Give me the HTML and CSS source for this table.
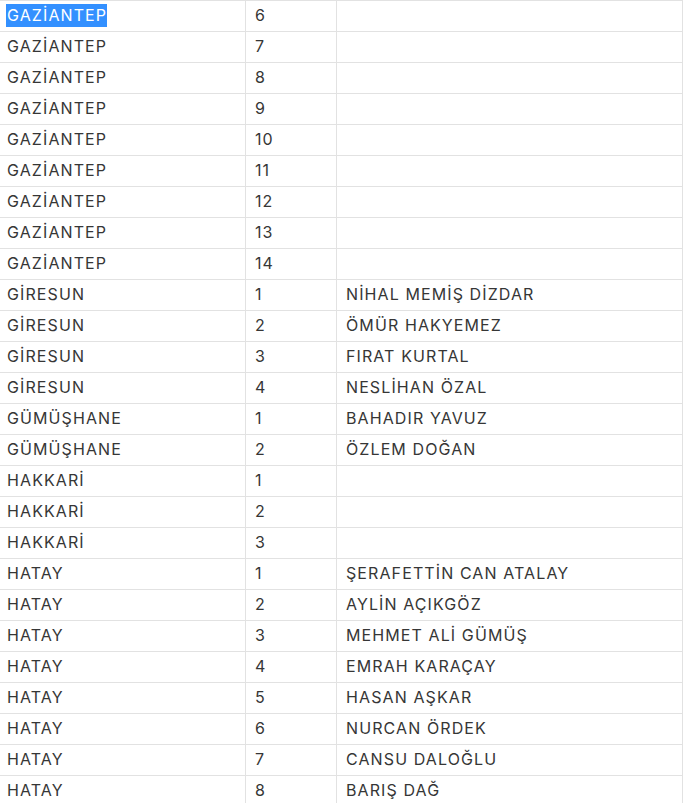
FILE: index.html
```html
<!DOCTYPE html>
<html lang="tr">
<head>
<meta charset="utf-8">
<link rel="stylesheet" href="styles.css">
</head>
<body>
<table class="grid">
<tbody>
<tr><td class="c1"><span class="sel">GAZİANTEP</span></td><td class="c2">6</td><td class="c3"></td></tr>
<tr><td class="c1">GAZİANTEP</td><td class="c2">7</td><td class="c3"></td></tr>
<tr><td class="c1">GAZİANTEP</td><td class="c2">8</td><td class="c3"></td></tr>
<tr><td class="c1">GAZİANTEP</td><td class="c2">9</td><td class="c3"></td></tr>
<tr><td class="c1">GAZİANTEP</td><td class="c2">10</td><td class="c3"></td></tr>
<tr><td class="c1">GAZİANTEP</td><td class="c2">11</td><td class="c3"></td></tr>
<tr><td class="c1">GAZİANTEP</td><td class="c2">12</td><td class="c3"></td></tr>
<tr><td class="c1">GAZİANTEP</td><td class="c2">13</td><td class="c3"></td></tr>
<tr><td class="c1">GAZİANTEP</td><td class="c2">14</td><td class="c3"></td></tr>
<tr><td class="c1">GİRESUN</td><td class="c2">1</td><td class="c3">NİHAL MEMİŞ DİZDAR</td></tr>
<tr><td class="c1">GİRESUN</td><td class="c2">2</td><td class="c3">ÖMÜR HAKYEMEZ</td></tr>
<tr><td class="c1">GİRESUN</td><td class="c2">3</td><td class="c3">FIRAT KURTAL</td></tr>
<tr><td class="c1">GİRESUN</td><td class="c2">4</td><td class="c3">NESLİHAN ÖZAL</td></tr>
<tr><td class="c1">GÜMÜŞHANE</td><td class="c2">1</td><td class="c3">BAHADIR YAVUZ</td></tr>
<tr><td class="c1">GÜMÜŞHANE</td><td class="c2">2</td><td class="c3">ÖZLEM DOĞAN</td></tr>
<tr><td class="c1">HAKKARİ</td><td class="c2">1</td><td class="c3"></td></tr>
<tr><td class="c1">HAKKARİ</td><td class="c2">2</td><td class="c3"></td></tr>
<tr><td class="c1">HAKKARİ</td><td class="c2">3</td><td class="c3"></td></tr>
<tr><td class="c1">HATAY</td><td class="c2">1</td><td class="c3">ŞERAFETTİN CAN ATALAY</td></tr>
<tr><td class="c1">HATAY</td><td class="c2">2</td><td class="c3">AYLİN AÇIKGÖZ</td></tr>
<tr><td class="c1">HATAY</td><td class="c2">3</td><td class="c3">MEHMET ALİ GÜMÜŞ</td></tr>
<tr><td class="c1">HATAY</td><td class="c2">4</td><td class="c3">EMRAH KARAÇAY</td></tr>
<tr><td class="c1">HATAY</td><td class="c2">5</td><td class="c3">HASAN AŞKAR</td></tr>
<tr><td class="c1">HATAY</td><td class="c2">6</td><td class="c3">NURCAN ÖRDEK</td></tr>
<tr><td class="c1">HATAY</td><td class="c2">7</td><td class="c3">CANSU DALOĞLU</td></tr>
<tr><td class="c1">HATAY</td><td class="c2">8</td><td class="c3">BARIŞ DAĞ</td></tr>
</tbody>
</table>
</body>
</html>
```
FILE: styles.css
```css
html, body {
  margin: 0;
  padding: 0;
  background: #fff;
}
body {
  font-family: Inter, "Noto Sans", sans-serif;
  font-size: 16px;
  letter-spacing: 1.1px;
  color: #363636;
  overflow: hidden;
}
.grid {
  border-collapse: collapse;
  table-layout: fixed;
  width: 683px;
  margin-left: -1px;
}
.grid td {
  border: 1px solid #e2e2e2;
  height: 31px;
  padding: 0 0 2px 7px;
  vertical-align: middle;
  white-space: nowrap;
  box-sizing: border-box;
  line-height: 23px;
}
.c1 { width: 246px; }
.c2 { width: 91px; }
.c3 { width: 346px; }
.grid td.c2 { padding-left: 9px; }
.grid td.c3 { padding-left: 9px; }
.sel {
  background: #3390ff;
  color: #fff;
  display: inline-block;
  line-height: 23px;
  padding-left: 1px;
  margin-left: -1px;
}
```
